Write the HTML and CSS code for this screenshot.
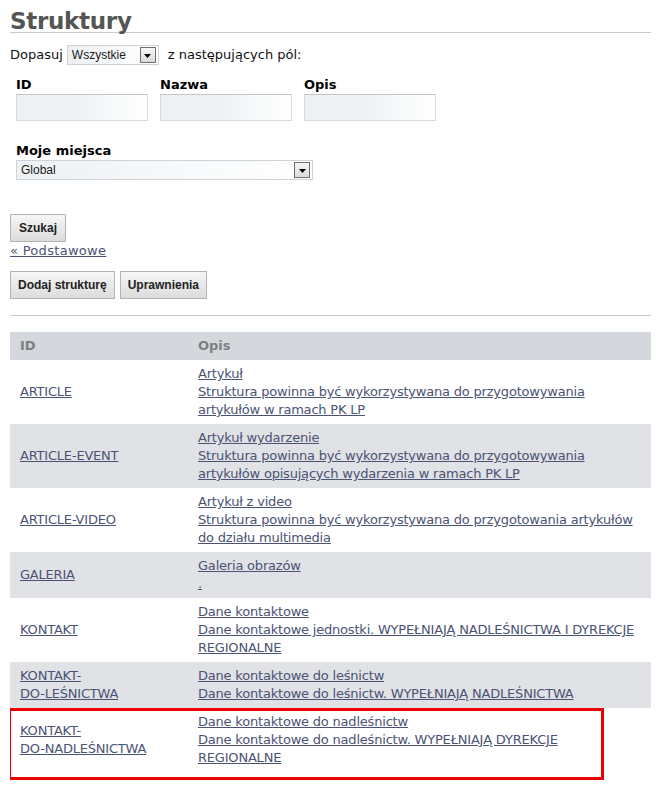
FILE: index.html
```html
<!DOCTYPE html>
<html lang="pl">
<head>
    <meta charset="UTF-8">
    <title>Struktury</title>
    <link rel="stylesheet" href="styles.css">
</head>
<body>
    <h1 class="title">Struktury</h1>

    <div class="match-row">
        <span>Dopasuj</span>
        <div class="select select-small">
            <span class="select-text">Wszystkie</span>
            <span class="select-arrow"><svg width="7" height="4" viewBox="0 0 7 4"><path d="M0 0h7L3.5 4z" fill="#000"/></svg></span>
        </div>
        <span>z następujących pól:</span>
    </div>

    <div class="fields">
        <div class="field">
            <label>ID</label>
            <div class="text-input"></div>
        </div>
        <div class="field">
            <label>Nazwa</label>
            <div class="text-input"></div>
        </div>
        <div class="field">
            <label>Opis</label>
            <div class="text-input"></div>
        </div>
    </div>

    <div class="field place">
        <label>Moje miejsca</label>
        <div class="select select-wide">
            <span class="select-text">Global</span>
            <span class="select-arrow"><svg width="7" height="4" viewBox="0 0 7 4"><path d="M0 0h7L3.5 4z" fill="#000"/></svg></span>
        </div>
    </div>

    <button class="btn search">Szukaj</button>
    <a href="#" class="back">« Podstawowe</a>

    <div class="actions">
        <button class="btn">Dodaj strukturę</button>
        <button class="btn">Uprawnienia</button>
    </div>

    <hr class="sep">

    <div class="results">
        <table>
            <thead>
                <tr><th class="col-id">ID</th><th>Opis</th></tr>
            </thead>
            <tbody>
                <tr>
                    <td class="col-id"><a href="#">ARTICLE</a></td>
                    <td><a href="#">Artykuł</a><br><a href="#">Struktura powinna być wykorzystywana do przygotowywania artykułów w ramach PK LP</a></td>
                </tr>
                <tr class="alt">
                    <td class="col-id"><a href="#">ARTICLE-EVENT</a></td>
                    <td><a href="#">Artykuł wydarzenie</a><br><a href="#">Struktura powinna być wykorzystywana do przygotowywania artykułów opisujących wydarzenia w ramach PK LP</a></td>
                </tr>
                <tr>
                    <td class="col-id"><a href="#">ARTICLE-VIDEO</a></td>
                    <td><a href="#">Artykuł z video</a><br><a href="#">Struktura powinna być wykorzystywana do przygotowania artykułów do działu multimedia</a></td>
                </tr>
                <tr class="alt">
                    <td class="col-id"><a href="#">GALERIA</a></td>
                    <td><a href="#">Galeria obrazów</a><br><a href="#">.</a></td>
                </tr>
                <tr>
                    <td class="col-id"><a href="#">KONTAKT</a></td>
                    <td><a href="#">Dane kontaktowe</a><br><a href="#">Dane kontaktowe jednostki. WYPEŁNIAJĄ NADLEŚNICTWA I DYREKCJE REGIONALNE</a></td>
                </tr>
                <tr class="alt">
                    <td class="col-id"><a href="#">KONTAKT-<br>DO-LEŚNICTWA</a></td>
                    <td><a href="#">Dane kontaktowe do leśnictw</a><br><a href="#">Dane kontaktowe do leśnictw. WYPEŁNIAJĄ NADLEŚNICTWA</a></td>
                </tr>
                <tr>
                    <td class="col-id"><a href="#">KONTAKT-<br>DO-NADLEŚNICTWA</a></td>
                    <td><a href="#">Dane kontaktowe do nadleśnictw</a><br><a href="#">Dane kontaktowe do nadleśnictw. WYPEŁNIAJĄ DYREKCJE REGIONALNE</a></td>
                </tr>
            </tbody>
        </table>
        <div class="highlight"></div>
    </div>
</body>
</html>
```

FILE: styles.css
```css
*{
    box-sizing: border-box;
}

html{
    background: #fff;
}

body{
    margin: 0 10px;
    padding: 10px 0 10px;
    min-height: 790px;
    color: #111;
    font-family: "DejaVu Sans", Verdana, sans-serif;
    font-size: 13px;
    line-height: 16px;
}

.title{
    margin: 0;
    font-size: 23px;
    line-height: 22px;
    font-weight: bold;
    color: #555;
    letter-spacing: -0.3px;
    border-bottom: 1px solid #cbcbcb;
}

.match-row{
    display: flex;
    align-items: center;
    gap: 4px;
    height: 20px;
    margin-top: 12px;
}

.match-row .select{
    margin-right: 5px;
}

/* fake select boxes */
.select{
    display: flex;
    align-items: center;
    height: 20px;
    border: 1px solid #cfd3d8;
    background: linear-gradient(to right, #edf1f4, #fff);
    font-family: "Liberation Sans", Arial, sans-serif;
    font-size: 12px;
    color: #1a1a1a;
    padding: 0 2px 0 4px;
}

.select-text{
    flex: 1;
}

.select-arrow{
    width: 16px;
    height: 16px;
    border: 1px solid #6f6f6f;
    background: linear-gradient(#f7f7f7, #d9d9d9);
    display: flex;
    align-items: center;
    justify-content: center;
    padding-top: 1px;
}

.select-small{
    width: 92px;
}

.select-wide{
    width: 297px;
}

.fields{
    display: flex;
    gap: 12px;
    margin-top: 12px;
    padding-left: 6px;
}

.field label{
    display: block;
    font-weight: bold;
    color: #000;
    margin-bottom: 1px;
}

.text-input{
    width: 132px;
    height: 27px;
    border: 1px solid #dadada;
    border-top-color: #c6c6c6;
    background: linear-gradient(to right, #edf1f4 40%, #fff);
}

.place{
    margin-top: 22px;
    padding-left: 6px;
}

.btn{
    display: block;
    height: 28px;
    padding: 0 7px;
    border: 1px solid #b3b3b3;
    background: linear-gradient(#f6f6f6, #dcdcdc);
    font-family: "Liberation Sans", Arial, sans-serif;
    font-size: 12px;
    font-weight: bold;
    color: #222;
}

.search{
    margin-top: 34px;
    width: 56px;
}

.back{
    display: block;
    margin-top: 1px;
    color: #4b5374;
    letter-spacing: 0.3px;
    width: max-content;
}

.actions{
    display: flex;
    gap: 5px;
    margin-top: 12px;
}

.sep{
    margin: 16px 0 0;
    border: 0;
    border-top: 1px solid #c8c8c8;
}

.results{
    position: relative;
    margin-top: 16px;
}

table{
    width: 100%;
    border-collapse: collapse;
    line-height: 18px;
}

th{
    height: 28px;
    padding: 0 10px;
    text-align: left;
    background: #d4d8dd;
    color: #7f7f7f;
    font-weight: bold;
}

td{
    padding: 5px 10px;
    vertical-align: middle;
    letter-spacing: -0.2px;
}

.col-id{
    width: 178px;
}

tr.alt td{
    background: #e0e2e6;
}

td a{
    color: #4b5374;
}

/* red box marking the last row */
.highlight{
    position: absolute;
    left: -2px;
    top: 376px;
    width: 596px;
    height: 72px;
    border: 3px solid #ee0000;
}
```
